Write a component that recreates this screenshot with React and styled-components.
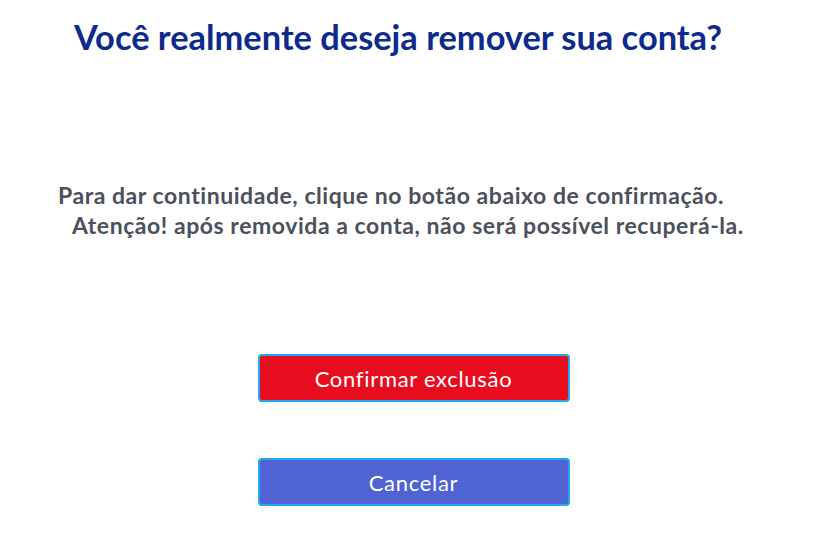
import React from "react";
import styled, { createGlobalStyle } from "styled-components";

const GlobalStyle = createGlobalStyle`
  body {
    margin: 0;
    background: #fff;
    font-family: Lato, "Open Sans", sans-serif;
  }
`;

const Page = styled.div`
  display: flex;
  flex-direction: column;
  align-items: center;
  width: 834px;
  min-height: 546px;
`;

const Title = styled.h1`
  margin: 17px 0 0;
  padding-right: 38px;
  font-size: 34.4px;
  font-weight: 700;
  color: #0e2a8d;
  line-height: 40px;
  white-space: nowrap;
`;

const Message = styled.p`
  align-self: flex-start;
  margin: 124px 0 0 58px;
  font-size: 23px;
  font-weight: 700;
  letter-spacing: 0.55px;
  line-height: 29.5px;
  color: #4b505c;
  white-space: pre;
`;

const Indent = styled.span`
  display: inline-block;
  width: 14px;
`;

const Actions = styled.div`
  display: flex;
  flex-direction: column;
  gap: 56px;
  margin-top: 114px;
  padding-right: 7px;
`;

const Button = styled.button`
  width: 312px;
  height: 48px;
  border: 2px solid #22a8f0;
  border-radius: 4px;
  background-color: ${(p) => (p.$danger ? "#e80c1f" : "#4f63d3")};
  color: #fff;
  font-family: Lato, sans-serif;
  font-size: 22px;
  letter-spacing: 0.7px;
  cursor: pointer;
`;

export default function App() {
  return (
    <Page>
      <GlobalStyle />
      <Title>Você realmente deseja remover sua conta?</Title>
      <Message>
        {"Para dar continuidade, clique no botão abaixo de confirmação.\n"}
        <Indent />
        {"Atenção! após removida a conta, não será possível recuperá-la."}
      </Message>
      <Actions>
        <Button $danger>Confirmar exclusão</Button>
        <Button>Cancelar</Button>
      </Actions>
    </Page>
  );
}
